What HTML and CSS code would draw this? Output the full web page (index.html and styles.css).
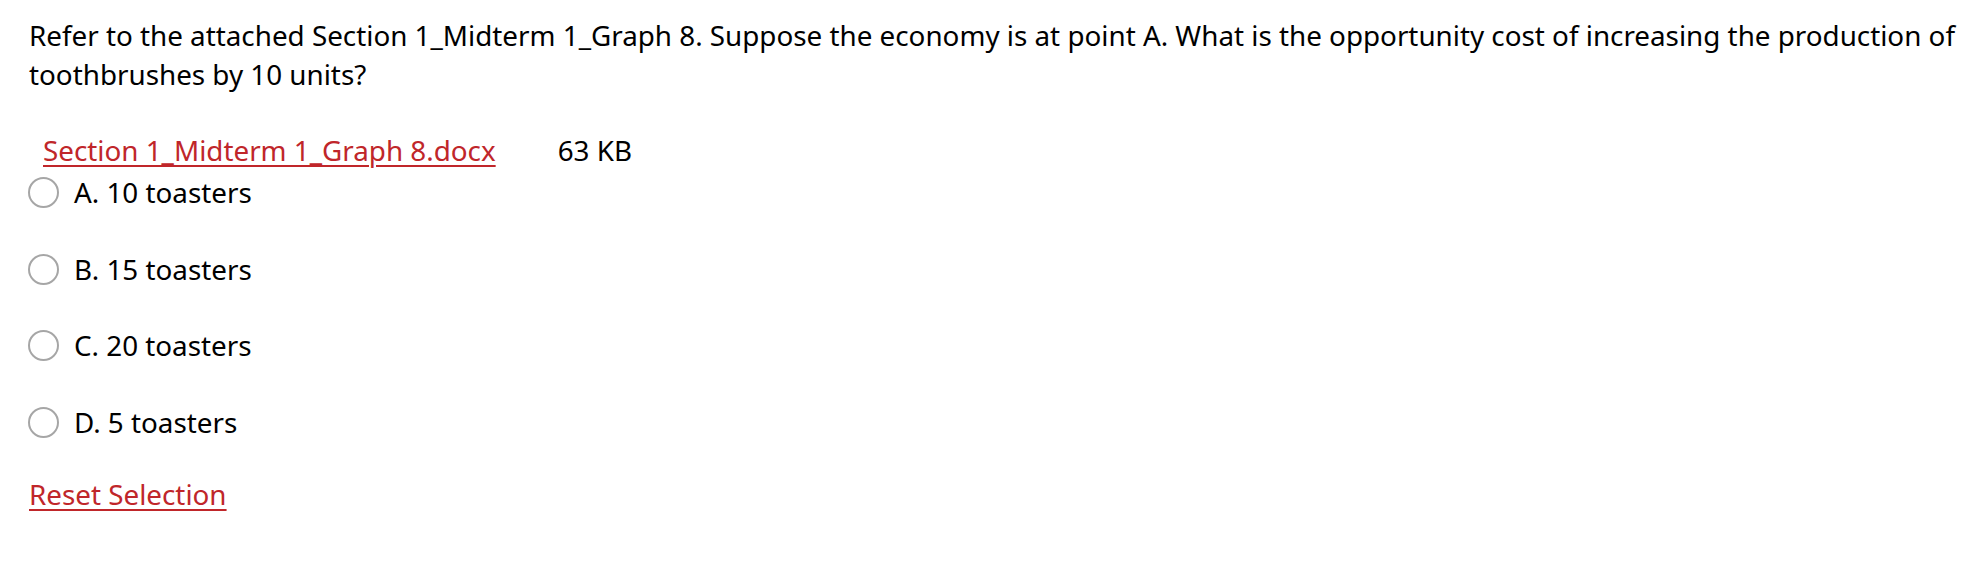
FILE: index.html
```html
<!DOCTYPE html>
<html>
<head>
<meta charset="utf-8">
<link rel="stylesheet" href="styles.css">
</head>
<body>
<div class="question">
  <p class="prompt">Refer to the attached Section 1_Midterm 1_Graph 8. Suppose the economy is at point A. What is the opportunity cost of increasing the production of toothbrushes by 10 units?</p>
  <div class="attachment"><a href="#" class="link">Section 1_Midterm 1_Graph 8.docx</a><span class="size">63 KB</span></div>
  <ul class="options">
    <li class="option"><span class="radio"></span><span class="label">A. 10 toasters</span></li>
    <li class="option"><span class="radio"></span><span class="label">B. 15 toasters</span></li>
    <li class="option"><span class="radio"></span><span class="label">C. 20 toasters</span></li>
    <li class="option"><span class="radio"></span><span class="label">D. 5 toasters</span></li>
  </ul>
  <a href="#" class="link reset">Reset Selection</a>
</div>
</body>
</html>
```
FILE: styles.css
```css
html, body {
  margin: 0;
  padding: 0;
  background: #ffffff;
}
body {
  font-family: "Noto Sans", "Open Sans", sans-serif;
  font-size: 27.8px;
  line-height: 39px;
  color: #000000;
}
.question {
  padding: 16px 14px 0 29px;
}
.prompt {
  margin: 0;
}
.link {
  color: #c0262a;
  text-decoration: underline;
  text-decoration-thickness: 2px;
  text-underline-offset: 4px;
}
.attachment {
  margin-top: 37px;
  padding-left: 14px;
  display: flex;
  gap: 62px;
}
.options {
  list-style: none;
  margin: 3px 0 0 0;
  padding: 0;
  display: flex;
  flex-direction: column;
  gap: 37.6px;
}
.option {
  display: flex;
  align-items: center;
  gap: 15px;
  height: 39px;
}
.radio {
  box-sizing: border-box;
  width: 31px;
  height: 31px;
  margin-left: -1px;
  border: 2px solid #a6a6a6;
  border-radius: 50%;
  background: #fff;
}
.reset {
  display: inline-block;
  margin-top: 33px;
}
```
